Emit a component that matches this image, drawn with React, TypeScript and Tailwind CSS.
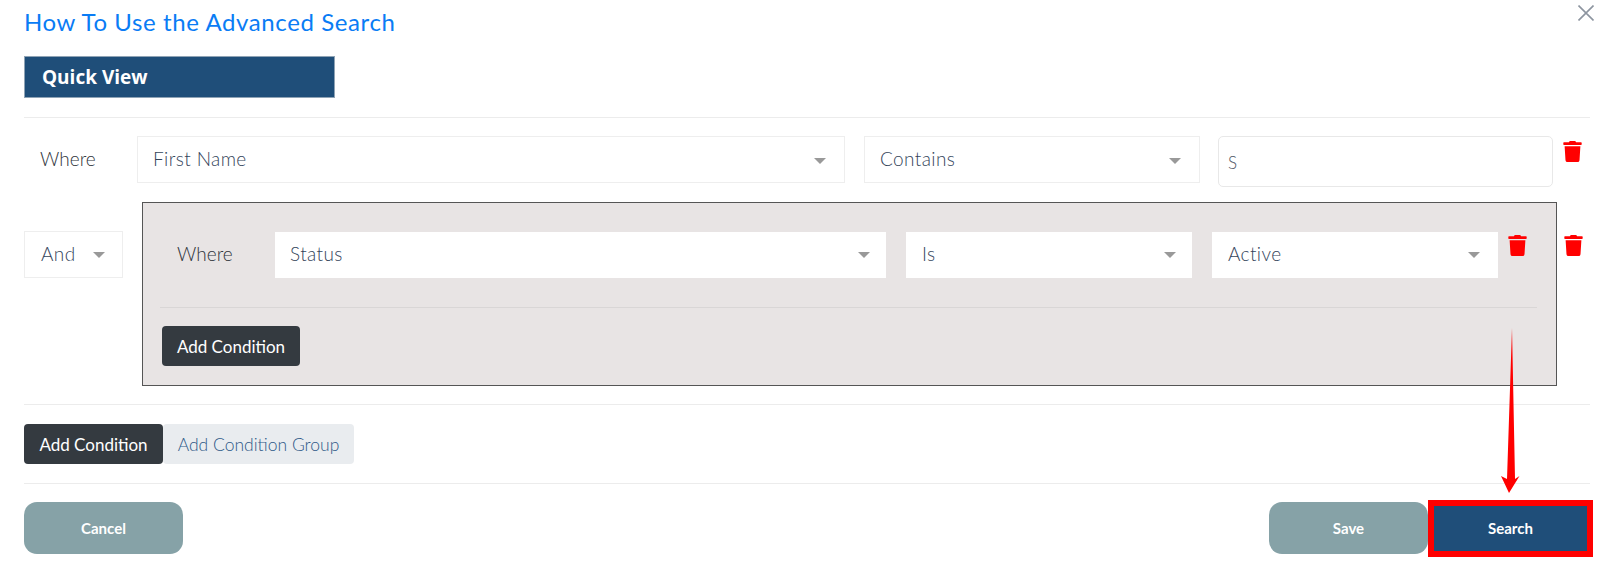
import { FaTrash } from "react-icons/fa";

function Caret({ className = "" }: { className?: string }) {
  return <span className={`h-0 w-0 border-x-[6px] border-t-[6px] border-x-transparent border-t-[#999999] ${className}`} />;
}

function Select({ label, className }: { label: string; className: string }) {
  return (
    <div className={`flex items-center justify-between text-[19px] font-light tracking-[0.4px] text-[#33445a] ${className}`}>
      <span>{label}</span>
      <Caret className="mt-[2px]" />
    </div>
  );
}

function Trash({ className = "" }: { className?: string }) {
  return <FaTrash className={`shrink-0 text-[21px] text-[#ff0000] ${className}`} />;
}

function ActionButton({ label }: { label: string }) {
  return (
    <button className="flex h-[52px] w-[159px] items-center justify-center rounded-[13px] bg-[#86a2a7] text-[15px] font-bold text-white">
      {label}
    </button>
  );
}

export default function App() {
  return (
    <div className="relative flex h-[569px] w-full flex-col overflow-hidden bg-white pl-[24px] pr-[10px] font-['Lato',sans-serif]">
      <svg className="absolute right-[6px] top-[5px] h-[16px] w-[16px] text-[#8d95a0]" viewBox="0 0 16 16" stroke="currentColor" strokeWidth="1.6" fill="none">
        <path d="M0.5 0.5 L15.5 15.5 M15.5 0.5 L0.5 15.5" />
      </svg>

      <h1 className="mt-[8px] h-[30px] text-[24px] leading-[28px] tracking-[0.6px] text-[#0a7cf5]">How To Use the Advanced Search</h1>

      <div className="mt-[18px] flex h-[42px] w-[311px] items-center border border-[#8fa3b5] bg-[#1f4e79] pl-[17px] font-['Open_Sans',sans-serif] text-[19px] font-bold text-white">
        Quick View
      </div>

      <div className="mt-[19px] h-[1px] bg-[#ececec]" />

      <div className="mt-[18px] flex h-[51px] items-start">
        <span className="flex h-[47px] w-[113px] items-center pl-[16px] text-[19px] font-light text-[#2f353c]">Where</span>
        <Select label="First Name" className="h-[47px] w-[708px] border border-[#eeeeee] pl-[15px] pr-[18px]" />
        <Select label="Contains" className="ml-[19px] h-[47px] w-[336px] border border-[#eeeeee] pl-[15px] pr-[18px]" />
        <div className="ml-[18px] flex h-[51px] w-[335px] items-center rounded-[5px] border border-[#e8e8e8] pl-[9px] pt-[2px] text-[17px] font-light text-[#4b5563]">
          S
        </div>
        <Trash className="ml-[9px] mt-[5px]" />
      </div>

      <div className="mt-[15px] flex h-[184px] items-start">
        <Select label="And" className="mt-[29px] h-[47px] w-[99px] border border-[#eeeeee] pb-[1px] pl-[16px] pr-[17px]" />
        <div className="ml-[19px] flex h-[184px] w-[1415px] flex-col border border-[#555555] bg-[#e8e4e4] pl-[19px] pr-[19px]">
          <div className="mt-[29px] flex h-[46px] items-start">
            <span className="flex h-[46px] w-[113px] items-center pb-[2px] pl-[15px] text-[19px] font-light text-[#2f353c]">Where</span>
            <Select label="Status" className="h-[46px] w-[611px] bg-white pb-[2px] pl-[15px] pr-[16px]" />
            <Select label="Is" className="ml-[20px] h-[46px] w-[286px] bg-white pb-[2px] pl-[16px] pr-[16px]" />
            <Select label="Active" className="ml-[20px] h-[46px] w-[286px] bg-white pb-[2px] pl-[16px] pr-[18px]" />
            <Trash className="ml-[9px] mt-[3px]" />
          </div>
          <div className="-ml-[2px] mt-[29px] h-[1px] bg-[#d9d6d6]" />
          <button className="mt-[18px] flex h-[40px] w-[138px] items-center justify-center rounded-[4px] bg-[#343a40] pt-[2px] text-[17px] font-normal text-white">
            Add Condition
          </button>
        </div>
        <Trash className="ml-[6px] mt-[33px]" />
      </div>

      <div className="mt-[18px] h-[1px] bg-[#ececec]" />

      <div className="mt-[19px] flex h-[40px]">
        <button className="flex w-[139px] items-center justify-center rounded-[4px] bg-[#343a40] pt-[2px] text-[17px] font-normal text-white">Add Condition</button>
        <button className="flex w-[191px] items-center justify-center rounded-[4px] bg-[#e9ecef] pt-[2px] text-[17.5px] font-light text-[#2f5a88]">Add Condition Group</button>
      </div>

      <div className="mt-[19px] h-[1px] bg-[#ececec]" />

      <div className="mt-[16px] flex items-start justify-between">
        <div className="mt-[2px]">
          <ActionButton label="Cancel" />
        </div>
        <div className="mr-[-3px] flex items-start">
          <div className="mt-[2px]">
            <ActionButton label="Save" />
          </div>
          <div className="flex h-[57px] w-[165px] items-center justify-center border-[6px] border-[#ff0000] bg-[#1f4e79] text-[15px] font-bold text-white">
            Search
          </div>
        </div>
      </div>

      <svg className="absolute left-[1498px] top-[326px] h-[170px] w-[28px]" viewBox="0 0 28 170">
        <path d="M14 2 L17 153 L21.5 150 L11 167 L3 150 L9 153 Z" fill="#ff0000" />
      </svg>
    </div>
  );
}
